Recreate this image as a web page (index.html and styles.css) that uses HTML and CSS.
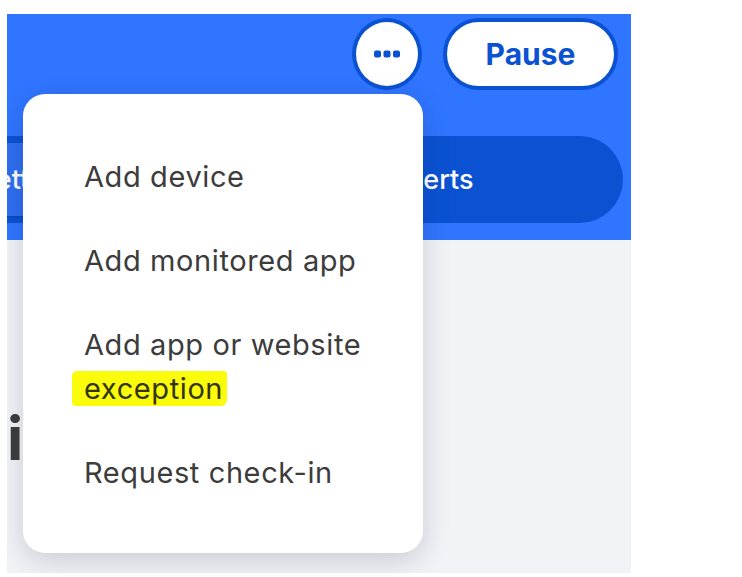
FILE: index.html
```html
<!DOCTYPE html>
<html lang="en">
  <head>
    <meta charset="UTF-8" />
    <meta name="viewport" content="width=device-width, initial-scale=1.0" />
    <title>Family Dashboard</title>

    <link rel="stylesheet" href="styles.css">
  </head>

  <body>
    <div class="app">
      <div class="header">
        <div class="top-bar">
          <button class="more-btn" aria-label="More">
            <svg width="26" height="8" viewBox="0 0 26 8">
              <rect x="0" y="0.5" width="7" height="7" rx="2" fill="#0b52d3" />
              <rect x="9.5" y="0.5" width="7" height="7" rx="2" fill="#0b52d3" />
              <rect x="19" y="0.5" width="7" height="7" rx="2" fill="#0b52d3" />
            </svg>
          </button>
          <button class="pause-btn">Pause</button>
        </div>

        <div class="tabs">
          <div class="tab tab-active">Settings</div>
          <div class="tab tab-alerts">Alerts</div>
        </div>
      </div>

      <div class="content">
        <h1 class="device-title">iPhone</h1>
      </div>

      <!-- dropdown opened from the "..." button -->
      <div class="menu">
        <div class="menu-item">Add device</div>
        <div class="menu-item">Add monitored app</div>
        <div class="menu-item">Add app or website <span class="marker">exception</span></div>
        <div class="menu-item">Request check-in</div>
      </div>
    </div>
  </body>
</html>
```

FILE: styles.css
```css
body {
  margin: 0;
  background-color: #ffffff;
  font-family: "Inter", "Roboto", sans-serif;
}

.app {
  position: relative;
  margin: 14px 0 0 7px;
  width: 624px;
  height: 559px;
  overflow: hidden;
  background-color: #f2f3f7;
}

.header {
  background-color: #3075ff;
  padding: 4px 0 17px;
}

.top-bar {
  display: flex;
  justify-content: flex-end;
  gap: 21px;
  padding-right: 13px;
}

.more-btn {
  width: 70px;
  height: 72px;
  border: 4px solid #0b52d3;
  border-radius: 50%;
  background-color: #ffffff;
  display: flex;
  justify-content: center;
  align-items: center;
  padding: 0;
  cursor: pointer;
}

.pause-btn {
  width: 175px;
  height: 72px;
  border: 4px solid #0b52d3;
  border-radius: 36px;
  background-color: #ffffff;
  color: #0b52d3;
  font-family: "Inter", sans-serif;
  font-weight: 700;
  font-size: 30px;
  cursor: pointer;
}

.tabs {
  display: flex;
  margin: 46px 8px 0 -201px;
  padding: 7px;
  height: 73px;
  border-radius: 44px;
  background-color: #0b52d3;
}

.tab {
  flex: 1;
  display: flex;
  justify-content: center;
  align-items: center;
  color: #ffffff;
  font-size: 27px;
  font-weight: 500;
  border-radius: 37px;
}

.tab-alerts {
  padding-left: 6px;
}

.tab-active {
  flex: none;
  width: 436px;
  background-color: #2f6ff0;
  box-shadow: 0 1px 2px rgba(0, 0, 0, 0.15);
}

.content {
  padding-top: 162px;
}

.device-title {
  margin: 0;
  font-size: 60px;
  line-height: 72px;
  font-weight: 700;
  color: #3d3d3d;
}

.menu {
  position: absolute;
  left: 16px;
  top: 80px;
  width: 400px;
  box-sizing: border-box;
  padding: 41px 36px 38px 61px;
  background-color: #ffffff;
  border-radius: 22px;
  box-shadow: 0 8px 28px rgba(20, 30, 60, 0.18);
}

.menu-item {
  padding: 20px 0;
  font-size: 29px;
  line-height: 44px;
  letter-spacing: 0.6px;
  color: #3c3c3c;
}

.marker {
  background-color: #fbfb0c;
  color: #34340a;
  padding: 0 4px 0 12px;
  margin-left: -12px;
  border-radius: 5px 3px 6px 4px;
}
```
